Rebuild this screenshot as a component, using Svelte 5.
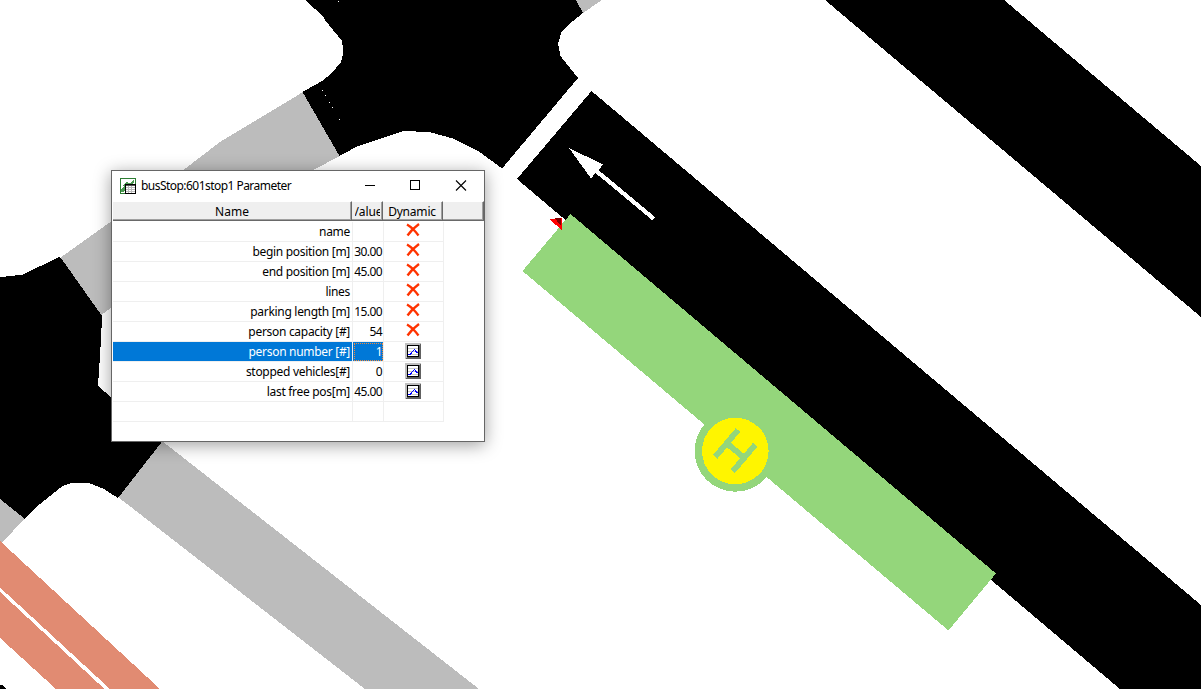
<script>
  const rows = [
    { name: 'name', value: '', dynamic: false },
    { name: 'begin position [m]', value: '30.00', dynamic: false },
    { name: 'end position [m]', value: '45.00', dynamic: false },
    { name: 'lines', value: '', dynamic: false },
    { name: 'parking length [m]', value: '15.00', dynamic: false },
    { name: 'person capacity [#]', value: '54', dynamic: false },
    { name: 'person number [#]', value: '1', dynamic: true, selected: true },
    { name: 'stopped vehicles[#]', value: '0', dynamic: true },
    { name: 'last free pos[m]', value: '45.00', dynamic: true },
    { name: '', value: '', dynamic: null }
  ];
</script>

<main>
  <svg class="map" viewBox="0 0 1201 689" width="1201" height="689" shape-rendering="crispEdges">
    <!-- footpaths -->
    <g fill="#bcbcbc">
      <path d="M303 92L220 142L186 168L60 258L101 315L111 308L313 170L340 156Z" />
      <path d="M575 0L583 13L602 0Z" />
      <path d="M162 441L479 689H365L118 497Z" />
      <path d="M0 498L25 518L2 543L0 541Z" />
    </g>
    <!-- junctions and lanes -->
    <path d="M305 0L324 17L325 20L342 41L343.5 52L341 62L332 73L322 81L302.5 92L339.5 156L356 147L403 131L429 132L453 138.500L479 151.500L502 168.500L578 78L560.500 56L558 44L561.500 32L570.500 23L583 13L576 0Z" />
    <path d="M0 276.500H6L23 274.500L59 257L61 258L102 316L101 340L98 386L112 398L162.500 441L118 498L103 488.500L90 483.500L80 482.500L71.500 483L62.500 486L55 492L37 506.500L25 519L0 499Z" />
    <path d="M825 0L1201 317V166L1004 0Z" />
    <path d="M591.500 91L1201 605V689H1120L517 179Z" />
    <path d="M0 685.500L2 685L6 689H0Z" />
    <g fill="#fff">
      <rect x="338" y="1" width="1" height="1" /><rect x="322" y="90" width="1" height="1" />
      <rect x="325" y="95" width="1" height="1" /><rect x="329" y="102" width="1" height="1" />
      <rect x="332" y="107" width="1" height="1" /><rect x="339" y="119" width="1" height="1" />
      <path d="M569 148L603 164.500L598.500 170L655 217L652 220L595.500 173L591 178.500Z" />
    </g>
    <!-- bicycle lanes -->
    <g fill="#e18b72">
      <path d="M0 541L160 689H110L0 587.500Z" />
      <path d="M0 592L104.500 689H56L0 638Z" />
    </g>
    <!-- bus stop -->
    <path fill="#94d67b" d="M570.500 214L996 573.500L948.500 630.500L522.500 271Z" />
    <path fill="#f00" d="M549 219L561.500 218L562 230Z" />
    <path fill="#800000" d="M555 218.500L561 218V226Z" />
    <circle cx="735.300" cy="451" r="40.700" fill="#94d67b" />
    <circle cx="735.300" cy="451" r="33.300" fill="#fff500" />
    <path d="M738 430L715.300 456.700M755.300 444.700L732.700 471.300M727 443.500L744.500 458" stroke="#94d67b" stroke-width="5.800" />
  </svg>

  <section class="window">
    <header class="titlebar">
      <svg class="app" width="16" height="16" shape-rendering="crispEdges">
        <rect x=".5" y=".5" width="15" height="15" fill="#fff" stroke="#2c7d32" />
        <path d="M1 14V11L4 9L3 7L6 4L10 5L14 2V5L11 7L7 8L5 12L3 14Z" fill="#4c9a52" />
        <rect x="5.500" y="6.500" width="10" height="9" fill="#fff" stroke="#000" />
        <path d="M6 7.500H15" stroke="#555" />
        <path d="M6 9.500H15M6 11.500H15M6 13.500H15M8.500 8V15M11.500 8V15" stroke="#bbb" />
      </svg>
      <h1>busStop:601stop1 Parameter</h1>
      <svg class="controls" width="102" height="12" fill="none" stroke="#000">
        <path d="M0 5.500H10M45.500 .5H54.500V9.500H45.500Z" shape-rendering="crispEdges" />
        <path d="M91 .5L101 10.500M101 .5L91 10.500" stroke-width="1.100" />
      </svg>
    </header>
    <div class="line head">
      <span>Name</span><span><b class="clip">/alue</b></span><span class="dynamic">Dynamic</span><span></span>
    </div>
    {#each rows as row}
      <div class="line row" class:selected={row.selected}>
        <span class="name">{row.name}</span>
        <span class="value">{row.value}</span>
        <span class="state">
          {#if row.dynamic === true}
            <svg width="16" height="16" shape-rendering="crispEdges">
              <rect width="16" height="16" fill="#606060" />
              <path d="M0 0H16L14 2V14H2L0 16Z" fill="#c0c0c0" />
              <rect x="2.500" y="2.500" width="11" height="11" fill="#fff" stroke="#000" />
              <path d="M3 5.500H13M3 8.500H13M3 11.500H13" stroke="#c8c8c8" />
              <path d="M3 11.500H5L9.500 6.500L11 8.500L12 9.500H13" fill="none" stroke="#00f" />
            </svg>
          {:else if row.dynamic === false}
            <svg class="cross" width="14" height="14" fill="none" stroke="#ff3300">
              <path d="M1 1.500Q7 5 12.500 12.500M13 1Q6 6 1.500 12.500" stroke-width="2.300" />
            </svg>
          {/if}
        </span>
      </div>
    {/each}
  </section>
</main>

<style>
  :global(body) { margin: 0; overflow: hidden; background: #fff; }
  main { position: relative; width: 1201px; height: 689px; overflow: hidden; font: 12px 'Noto Sans', sans-serif; color: #000; }
  svg { display: block; flex: none; }
  .window {
    position: absolute; left: 111px; top: 170px; width: 374px; height: 272px;
    box-sizing: border-box; border: 1px solid #666; background: #fff;
    box-shadow: 0 3px 16px rgba(0, 0, 0, .38);
  }
  .titlebar { display: flex; align-items: center; height: 30px; padding: 0 17px 0 8px; }
  h1 { flex: 1; margin: -2px 0 0 5px; font-size: 12px; font-weight: 400; white-space: nowrap; letter-spacing: -.54px; }
  .line { display: grid; margin-left: 1px; white-space: nowrap; }
  .head { grid-template-columns: 239px 31px 60px 41px; height: 20px; margin-bottom: 1px; }
  .head span {
    box-sizing: border-box; display: flex; justify-content: center; height: 20px; overflow: hidden;
    border-top: 1px solid #fff; border-right: 1px solid #696969; border-bottom: 1px solid #696969;
    background: #efefef; box-shadow: inset -1px -1px #a0a0a0; line-height: 19px;
  }
  .head .dynamic { padding-right: 1px; letter-spacing: -.2px; }
  .head b { font-weight: 400; }
  .head .clip { width: 25px; height: 17px; overflow: hidden; letter-spacing: -.1px; }
  .row { grid-template-columns: 240px 31px 60px; height: 20px; }
  .row span { box-sizing: border-box; height: 20px; border-right: 1px solid #efefef; border-bottom: 1px solid #efefef; line-height: 20px; }
  .name, .value { text-align: right; padding-right: 2px; letter-spacing: -.3px; }
  .row .value { padding-right: 1px; letter-spacing: -.6px; }
  .state { display: flex; justify-content: center; padding: 1px 2px 0 0; }
  .cross { margin-top: 0; }
  .selected .name, .selected .value { color: #fff; background: #0078d7; background-clip: padding-box; }
  .selected .value { outline: 1px dotted #f08a3c; outline-offset: -2px; }
</style>
